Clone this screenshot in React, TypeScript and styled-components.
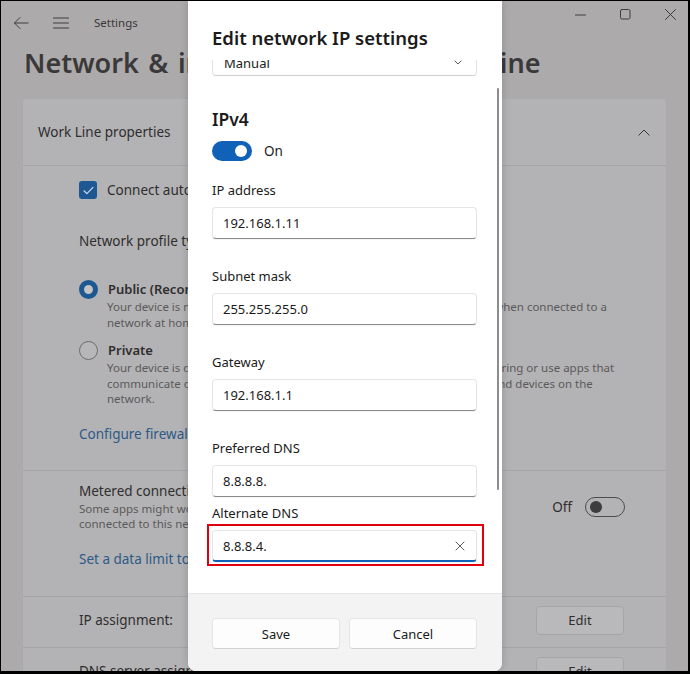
import React from 'react';
import styled, { createGlobalStyle } from 'styled-components';

const GlobalStyle = createGlobalStyle`
  html, body {
    margin: 0;
    padding: 0;
    background: #000;
  }
  body {
    font-family: "Noto Sans", "Open Sans", sans-serif;
  }
  * {
    box-sizing: border-box;
  }
`;

const Screen = styled.div`
  position: relative;
  width: 690px;
  height: 674px;
  overflow: hidden;
  border-style: solid;
  border-color: #000;
  border-width: 1px 2px 3px 1px;
  background: #adaaab;
  color: #3a393a;
`;

/* ---------- dimmed settings window ---------- */

const TitleBar = styled.div`
  height: 44px;
  display: flex;
  align-items: center;
  padding-left: 12px;
`;

const TitleIcon = styled.div`
  width: 40px;
  display: flex;
  align-items: center;
  color: #3e3d3e;
`;

const AppName = styled.span`
  font-size: 11.5px;
  color: #3a393a;
  margin-left: 1px;
  margin-top: -2px;
`;

const WindowControls = styled.div`
  margin-left: auto;
  margin-right: -5px;
  align-self: flex-start;
  display: flex;
  align-items: center;
  padding-top: 3px;
  height: 24px;
`;

const ControlButton = styled.div`
  width: 45px;
  display: flex;
  justify-content: center;
  align-items: center;
  color: #3e3d3e;
`;

const PageHeading = styled.h1`
  margin: 0 0 0 23px;
  height: 53px;
  font-size: 27px;
  font-weight: 600;
  line-height: 36px;
  color: #3a393a;
  white-space: nowrap;
  word-spacing: 2.5px;
`;

const Card = styled.div`
  margin: 0 21px 0 21px;
  background: #b3b2b4;
  border: 1px solid #a9a8aa;
  border-radius: 4px 4px 0 0;
`;

const CardHeader = styled.div`
  height: 66px;
  display: flex;
  align-items: center;
  justify-content: space-between;
  padding: 0 16px 0 15px;
  font-size: 13.5px;
  color: #2f2e2f;
`;

const Section = styled.div<{ $top: number; $bottom: number }>`
  border-top: 1px solid #a5a4a6;
  padding: ${p => p.$top}px 42px ${p => p.$bottom}px 56px;
`;

const InlineRow = styled.div<{ $mt?: number }>`
  display: flex;
  align-items: center;
  gap: 10px;
  margin-top: ${p => p.$mt ?? 0}px;
  min-height: 20px;
`;

const BodyText = styled.div<{ $mt?: number }>`
  font-size: 13.5px;
  line-height: 20px;
  color: #2f2e2f;
  white-space: nowrap;
  margin-top: ${p => p.$mt ?? 0}px;
`;

const OptionTitle = styled.div`
  font-size: 13px;
  font-weight: 600;
  line-height: 20px;
  color: #2f2e2f;
`;

const Description = styled.div<{ $lh?: number; $indent?: number }>`
  font-size: 11.5px;
  line-height: ${p => p.$lh ?? 16}px;
  color: #5b5a5b;
  white-space: nowrap;
  padding-left: ${p => p.$indent ?? 28}px;
`;

const Link = styled.div<{ $mt?: number }>`
  font-size: 13.5px;
  line-height: 20px;
  color: #2c5b88;
  margin-top: ${p => p.$mt ?? 0}px;
  white-space: nowrap;
`;

const CheckBox = styled.div`
  width: 18px;
  height: 18px;
  border-radius: 3px;
  background: #1d5892;
  display: flex;
  align-items: center;
  justify-content: center;
  flex-shrink: 0;
`;

const Radio = styled.div<{ $checked?: boolean }>`
  width: 19px;
  height: 19px;
  border-radius: 50%;
  flex-shrink: 0;
  border: ${p => (p.$checked ? '5px solid #1d5892' : '1px solid #6c6b6d')};
  background: ${p => (p.$checked ? '#c3c2c4' : '#b7b6b8')};
`;

const SplitRow = styled.div`
  display: flex;
  align-items: center;
  justify-content: space-between;
`;

const ToggleLabel = styled.span`
  font-size: 13.5px;
  color: #2f2e2f;
`;

const OffSwitch = styled.div`
  width: 40px;
  height: 20px;
  border-radius: 10px;
  border: 1px solid #4c4b4d;
  display: flex;
  align-items: center;
  padding-left: 4px;

  &::before {
    content: '';
    width: 12px;
    height: 12px;
    border-radius: 50%;
    background: #3d3c3e;
  }
`;

const ToggleGroup = styled.div`
  display: flex;
  align-items: center;
  gap: 13px;
  margin-top: 2px;
  margin-right: -1px;
`;

const EditButton = styled.div`
  width: 88px;
  height: 29px;
  border-radius: 4px;
  background: #b9b8ba;
  border: 1px solid #a6a5a7;
  display: flex;
  align-items: center;
  justify-content: center;
  font-size: 13px;
  color: #2f2e2f;
`;

/* ---------- dialog ---------- */

const Dialog = styled.div`
  position: absolute;
  left: 187px;
  top: 0;
  bottom: 0;
  width: 314px;
  background: #ffffff;
  border-radius: 0 0 8px 8px;
  box-shadow: 0 0 8px rgba(0, 0, 0, 0.18);
  display: flex;
  flex-direction: column;
  color: #1b1b1b;
`;

const DialogHeader = styled.div`
  position: relative;
  z-index: 1;
  background: #ffffff;
  padding: 25px 24px 10px 24px;
`;

const DialogTitle = styled.h2`
  margin: 0;
  font-size: 18.5px;
  font-weight: 600;
  line-height: 24px;
  color: #1b1b1b;
`;

const DialogBody = styled.div`
  position: relative;
  flex: 1;
  overflow: hidden;
  padding: 0 25px 0 24px;
`;

const ScrollBar = styled.div`
  position: absolute;
  right: 3px;
  top: 28px;
  width: 2px;
  height: 402px;
  border-radius: 1px;
  background: #8c8c8c;
`;

const Dropdown = styled.div`
  margin-top: -16px;
  height: 32px;
  border: 1px solid #e3e3e3;
  border-bottom-color: #cfcfcf;
  border-radius: 4px;
  display: flex;
  align-items: center;
  justify-content: space-between;
  padding: 5px 14px 0 11px;
  font-size: 13px;
  color: #1b1b1b;
`;

const SectionTitle = styled.div`
  margin-top: 31px;
  font-size: 17.5px;
  font-weight: 600;
  line-height: 24px;
`;

const OnSwitch = styled.div`
  width: 40px;
  height: 20px;
  border-radius: 10px;
  background: #0f62b8;
  display: flex;
  align-items: center;
  justify-content: flex-end;
  padding-right: 5px;

  &::after {
    content: '';
    width: 12px;
    height: 12px;
    border-radius: 50%;
    background: #ffffff;
  }
`;

const SwitchRow = styled.div`
  margin-top: 10px;
  display: flex;
  align-items: center;
  gap: 12px;
  height: 20px;
  font-size: 13.5px;
`;

const FieldLabel = styled.div<{ $mt: number }>`
  margin-top: ${p => p.$mt}px;
  font-size: 13px;
  line-height: 18px;
  color: #1b1b1b;
`;

const TextBox = styled.div<{ $focused?: boolean }>`
  position: relative;
  margin-top: 8px;
  height: 32px;
  border: 1px solid #e5e5e5;
  border-bottom: ${p => (p.$focused ? '2px solid #0f62b8' : '1px solid #8a8a8a')};
  border-radius: 4px;
  display: flex;
  align-items: center;
  justify-content: space-between;
  padding: 0 11px 0 10px;
  font-size: 13px;
  color: #1b1b1b;
  box-shadow: 0 1px 1px rgba(0, 0, 0, 0.04);
`;

const Highlight = styled.div`
  position: relative;

  &::after {
    content: '';
    position: absolute;
    left: -5px;
    right: -7px;
    top: -6px;
    bottom: -4px;
    border: 2px solid #e1000e;
  }
`;

const DialogFooter = styled.div`
  height: 78px;
  background: #f3f3f3;
  border-top: 1px solid #e5e5e5;
  border-radius: 0 0 8px 8px;
  padding: 24px 25px 0 24px;
  display: grid;
  grid-template-columns: 1fr 1fr;
  gap: 9px;
  align-items: start;
`;

const DialogButton = styled.div`
  height: 31px;
  border-radius: 4px;
  background: #fdfdfd;
  border: 1px solid #e5e5e5;
  border-bottom-color: #d2d2d2;
  display: flex;
  align-items: center;
  justify-content: center;
  font-size: 13px;
  color: #1b1b1b;
`;

/* ---------- icons ---------- */

const Icon = ({ w, h, children, color = 'currentColor', sw = 1 }: { w: number; h: number; children: React.ReactNode; color?: string; sw?: number }) => (
  <svg width={w} height={h} viewBox={`0 0 ${w} ${h}`} fill="none" stroke={color} strokeWidth={sw} strokeLinecap="round" strokeLinejoin="round">
    {children}
  </svg>
);

const fields = [
  { label: 'IP address', value: '192.168.1.11', mt: 20 },
  { label: 'Subnet mask', value: '255.255.255.0', mt: 28 },
  { label: 'Gateway', value: '192.168.1.1', mt: 28 },
  { label: 'Preferred DNS', value: '8.8.8.8.', mt: 28 },
];

const App: React.FC = () => {
  return (
    <>
      <GlobalStyle />
      <Screen>
        <TitleBar>
          <TitleIcon>
            <Icon w={16} h={14}>
              <path d="M15 7H1.5M7 1.5L1.5 7L7 12.5" />
            </Icon>
          </TitleIcon>
          <TitleIcon>
            <Icon w={16} h={12}>
              <path d="M0.5 1H15.5M0.5 6H15.5M0.5 11H15.5" />
            </Icon>
          </TitleIcon>
          <AppName>Settings</AppName>
          <WindowControls>
            <ControlButton>
              <Icon w={11} h={2}>
                <path d="M0.5 1H10.5" />
              </Icon>
            </ControlButton>
            <ControlButton>
              <Icon w={11} h={11}>
                <rect x="0.5" y="0.5" width="9.5" height="9.5" rx="1.5" />
              </Icon>
            </ControlButton>
            <ControlButton>
              <Icon w={11} h={11}>
                <path d="M0.5 0.5L10.5 10.5M10.5 0.5L0.5 10.5" />
              </Icon>
            </ControlButton>
          </WindowControls>
        </TitleBar>

        <PageHeading>Network &amp; internet › Wi-Fi › Work Line</PageHeading>

        <Card>
          <CardHeader>
            <span>Work Line properties</span>
            <Icon w={12} h={7} color="#3a393a">
              <path d="M0.8 6.2L6 1L11.2 6.2" />
            </Icon>
          </CardHeader>

          <Section $top={14} $bottom={26}>
            <InlineRow>
              <CheckBox>
                <Icon w={11} h={9} color="#d0d9e4" sw={1.2}>
                  <path d="M1 4.8L3.9 7.6L10 1.4" />
                </Icon>
              </CheckBox>
              <BodyText>Connect automatically when in range</BodyText>
            </InlineRow>
            <BodyText $mt={31}>Network profile type</BodyText>
            <InlineRow $mt={28}>
              <Radio $checked />
              <OptionTitle>Public (Recommended)</OptionTitle>
            </InlineRow>
            <Description>Your device is not discoverable on the network. Use this in most cases—when connected to a</Description>
            <Description>network at home, work, or in a public place.</Description>
            <InlineRow $mt={9}>
              <Radio />
              <OptionTitle>Private</OptionTitle>
            </InlineRow>
            <Description $lh={15.5}>Your device is discoverable on the network. Select this if you need file sharing or use apps that</Description>
            <Description $lh={15.5}>communicate over this network. You should know and trust the people and devices on the</Description>
            <Description $lh={15.5}>network.</Description>
            <Link $mt={17}>Configure firewall and security settings</Link>
          </Section>

          <Section $top={10} $bottom={27}>
            <SplitRow>
              <div>
                <BodyText>Metered connection</BodyText>
                <Description $lh={15} $indent={0}>
                  Some apps might work differently to reduce data usage when you're
                </Description>
                <Description $lh={15} $indent={0}>
                  connected to this network
                </Description>
              </div>
              <ToggleGroup>
                <ToggleLabel>Off</ToggleLabel>
                <OffSwitch />
              </ToggleGroup>
            </SplitRow>
            <Link $mt={18}>Set a data limit to help control data usage on this network</Link>
          </Section>

          <Section $top={9} $bottom={12}>
            <SplitRow>
              <BodyText>IP assignment:</BodyText>
              <EditButton>Edit</EditButton>
            </SplitRow>
          </Section>

          <Section $top={9} $bottom={12}>
            <SplitRow>
              <BodyText>DNS server assignment:</BodyText>
              <EditButton>Edit</EditButton>
            </SplitRow>
          </Section>
        </Card>

        <Dialog>
          <DialogHeader>
            <DialogTitle>Edit network IP settings</DialogTitle>
          </DialogHeader>

          <DialogBody>
            <ScrollBar />
            <Dropdown>
              <span>Manual</span>
              <Icon w={8} h={5} color="#5a5a5a">
                <path d="M1 1L4 4L7 1" />
              </Icon>
            </Dropdown>

            <SectionTitle>IPv4</SectionTitle>
            <SwitchRow>
              <OnSwitch />
              <span>On</span>
            </SwitchRow>

            {fields.map(f => (
              <React.Fragment key={f.label}>
                <FieldLabel $mt={f.mt}>{f.label}</FieldLabel>
                <TextBox>{f.value}</TextBox>
              </React.Fragment>
            ))}

            <FieldLabel $mt={7}>Alternate DNS</FieldLabel>
            <Highlight>
              <TextBox $focused>
                <span>8.8.8.4.</span>
                <Icon w={10} h={10} color="#5c5c5c">
                  <path d="M1 1L9 9M9 1L1 9" />
                </Icon>
              </TextBox>
            </Highlight>
          </DialogBody>

          <DialogFooter>
            <DialogButton>Save</DialogButton>
            <DialogButton>Cancel</DialogButton>
          </DialogFooter>
        </Dialog>
      </Screen>
    </>
  );
};

export default App;
